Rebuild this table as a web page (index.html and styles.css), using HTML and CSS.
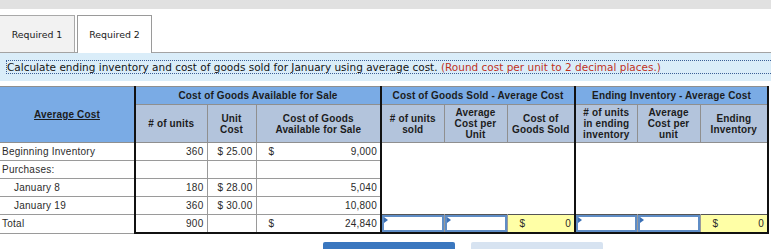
FILE: index.html
```html
<!DOCTYPE html>
<html>
<head>
<meta charset="utf-8">
<title>Average Cost</title>
<link rel="stylesheet" href="styles.css">
</head>
<body>
<div class="topbar"></div>
<div class="tabs">
  <div class="tab">Required 1</div>
  <div class="tab active">Required 2</div>
</div>
<div class="instr-band">
  <div class="instr">Calculate ending inventory and cost of goods sold for January using average cost. <span class="note">(Round cost per unit to 2 decimal places.)</span></div>
</div>
<table class="grid">
  <colgroup>
    <col class="w135"><col class="w72"><col class="w49"><col class="w125">
    <col class="w63"><col class="w63"><col class="w68">
    <col class="w62"><col class="w63"><col class="w68">
  </colgroup>
  <thead>
    <tr class="h1">
      <th rowspan="2" class="corner"><span class="ul">Average Cost</span></th>
      <th colspan="3" class="sec">Cost of Goods Available for Sale</th>
      <th colspan="3" class="sec">Cost of Goods Sold - Average Cost</th>
      <th colspan="3" class="sec">Ending Inventory - Average Cost</th>
    </tr>
    <tr class="h2">
      <th class="sec"># of units</th>
      <th>Unit<br>Cost</th>
      <th>Cost of Goods<br>Available for Sale</th>
      <th class="sec"># of units<br>sold</th>
      <th>Average<br>Cost per<br>Unit</th>
      <th>Cost of<br>Goods Sold</th>
      <th class="sec"># of units<br>in ending<br>inventory</th>
      <th>Average<br>Cost per<br>unit</th>
      <th>Ending<br>Inventory</th>
    </tr>
  </thead>
  <tbody>
    <tr>
      <td class="lbl">Beginning Inventory</td>
      <td class="num sec">360</td>
      <td class="num">$ 25.00</td>
      <td><div class="money"><span>$</span><span>9,000</span></div></td>
      <td colspan="3" rowspan="4" class="blank sec"></td>
      <td colspan="3" rowspan="4" class="blank sec"></td>
    </tr>
    <tr>
      <td class="lbl">Purchases:</td>
      <td class="sec"></td>
      <td></td>
      <td></td>
    </tr>
    <tr>
      <td class="lbl indent">January 8</td>
      <td class="num sec">180</td>
      <td class="num">$ 28.00</td>
      <td><div class="money"><span></span><span>5,040</span></div></td>
    </tr>
    <tr>
      <td class="lbl indent">January 19</td>
      <td class="num sec">360</td>
      <td class="num">$ 30.00</td>
      <td><div class="money"><span></span><span>10,800</span></div></td>
    </tr>
    <tr class="total">
      <td class="lbl">Total</td>
      <td class="num sec">900</td>
      <td></td>
      <td><div class="money"><span>$</span><span>24,840</span></div></td>
      <td class="inpcell sec"><div class="inp"></div></td>
      <td class="inpcell"><div class="inp"></div></td>
      <td class="yellow"><div class="money ymoney"><span>$</span><span>0</span></div></td>
      <td class="inpcell sec"><div class="inp"></div></td>
      <td class="inpcell"><div class="inp"></div></td>
      <td class="yellow"><div class="money ymoney"><span>$</span><span>0</span></div></td>
    </tr>
  </tbody>
</table>
<div class="buttons">
  <div class="btn primary"></div>
  <div class="btn secondary"></div>
</div>
</body>
</html>
```
FILE: styles.css
```css
html, body {
  margin: 0;
  padding: 0;
  background: #ffffff;
  font-family: "DejaVu Sans", Verdana, sans-serif;
  color: #1e1e1e;
  overflow: hidden;
}

.topbar {
  height: 9px;
  background: #e1e1e1;
}

.tabs {
  display: flex;
  gap: 2px;
  margin-top: 6px;
  border-bottom: 1px solid #a3a3a3;
  box-sizing: border-box;
  height: 38px;
}

.tab {
  width: 75px;
  box-sizing: border-box;
  border: 1px solid #a9a9a9;
  border-bottom: none;
  background: #f2f2f2;
  font-size: 9.4px;
  display: flex;
  align-items: center;
  justify-content: center;
  height: 37px;
  color: #1a1a1a;
}

.tab:first-child {
  border-left: none;
}

.tab.active {
  background: #ffffff;
  height: 38px;
  margin-bottom: -1px;
  border-color: #9a9a9a;
}

.instr-band {
  background: #daedf9;
  padding: 7px 0 7px 6px;
}

.instr {
  border: 1px dotted #3c5f96;
  border-right: none;
  font-size: 10.5px;
  line-height: 12px;
  color: #141414;
  white-space: nowrap;
}

.note {
  color: #c0321e;
}

.grid {
  margin-top: 5px;
  width: 768px;
  table-layout: fixed;
  border-collapse: collapse;
  font-family: "Liberation Sans", Arial, sans-serif;
  font-size: 10px;
  color: #2a2a2a;
  border-top: 1px solid #9b9b9b;
  border-right: 2px solid #111;
}

.w135 { width: 135px; }
.w72 { width: 72px; }
.w49 { width: 49px; }
.w125 { width: 125px; }
.w63 { width: 63px; }
.w68 { width: 68px; }
.w62 { width: 62px; }

.grid th {
  font-weight: bold;
  color: #1c1c1c;
  padding: 0 2px;
  line-height: 11px;
  border: 1px solid #8f8f8f;
  letter-spacing: 0.15px;
}

.grid .h1 th {
  background: #7aabe5;
  height: 17px;
}

.grid .h2 th {
  background: #b3c4dc;
  height: 37px;
}

.grid th.corner {
  background: #7aabe5;
  border-left: none;
}

.ul {
  text-decoration: underline;
}

.grid th.sec,
.grid td.sec {
  border-left: 2px solid #111;
}

.grid td {
  border: 1px solid #9a9a9a;
  height: 17px;
  padding: 0 3px;
  white-space: nowrap;
  letter-spacing: 0.25px;
}

.grid td.lbl {
  border-left: none;
  padding-left: 2px;
  color: #2c2c2c;
}

.grid td.indent {
  padding-left: 14px;
}

.grid td.num {
  text-align: right;
}

.money {
  display: flex;
  justify-content: space-between;
  padding-left: 9px;
}

.grid td.blank {
  border-top: 1px solid #9a9a9a;
  border-bottom: none;
  background: #fff;
}

.grid tr.total td {
  border-top: 1px solid #555;
  border-bottom: 2px solid #111;
}

.grid tr.total td.lbl {
  border-bottom: 1px solid #9a9a9a;
}

.grid td.inpcell {
  padding: 0;
}

.inp {
  position: relative;
  height: 13px;
  border: 2px solid #5f8dc6;
  background: #fff;
}

.inp::before {
  content: "";
  position: absolute;
  left: 0;
  top: 0;
  border-top: 3px solid transparent;
  border-bottom: 3px solid transparent;
  border-left: 4px solid #3a6fb5;
}

.grid td.yellow {
  background: #ffffa6;
  padding: 0 3px 0 0;
}

.ymoney {
  padding-left: 12px;
}

.buttons {
  display: flex;
  gap: 16px;
  margin-top: 8px;
  padding-left: 323px;
}

.btn {
  width: 132px;
  height: 20px;
  border-radius: 2px;
}

.btn.primary {
  background: #3a77bf;
}

.btn.secondary {
  background: #d7e3f1;
}
```
